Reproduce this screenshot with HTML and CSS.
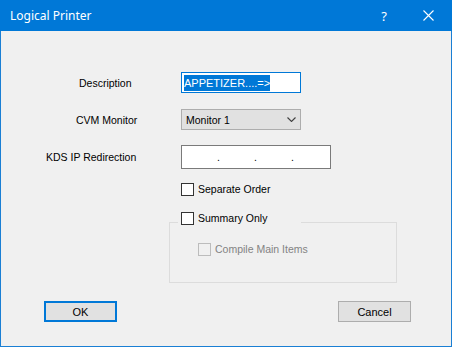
FILE: index.html
```html
<!DOCTYPE html>
<html lang="en">
<head>
    <meta charset="UTF-8">
    <title>Logical Printer</title>
    <link rel="stylesheet" href="styles.css">
</head>
<body>
    <div class="window">
        <div class="titlebar">
            <span class="title">Logical Printer</span>
            <span class="help">?</span>
            <span class="close">
                <svg width="11" height="11" viewBox="0 0 11 11"><path d="M0.5 0.5 L10.5 10.5 M10.5 0.5 L0.5 10.5" stroke="#fff" stroke-width="1.1" fill="none"/></svg>
            </span>
        </div>
        <div class="content">
            <div class="field field-desc">
                <label class="lbl lbl-desc">Description</label>
                <div class="textbox focused"><span class="selected">APPETIZER....=&gt;</span></div>
            </div>
            <div class="field field-cvm">
                <label class="lbl lbl-cvm">CVM Monitor</label>
                <div class="combo">
                    <span>Monitor 1</span>
                    <svg class="chev" width="9" height="5" viewBox="0 0 9 5"><path d="M0.5 0.5 L4.5 4.5 L8.5 0.5" stroke="#404040" stroke-width="1.1" fill="none"/></svg>
                </div>
            </div>
            <div class="field field-kds">
                <label class="lbl lbl-kds">KDS IP Redirection</label>
                <div class="ipbox">
                    <span class="ip-part">.</span>
                    <span class="ip-part">.</span>
                    <span class="ip-part">.</span>
                    <span class="ip-part"></span>
                </div>
            </div>
            <div class="check check-sep">
                <span class="box"></span>Separate Order
            </div>
            <div class="check check-summary">
                <span class="box"></span>Summary Only
            </div>
            <div class="group">
                <div class="check disabled">
                    <span class="box"></span>Compile Main Items
                </div>
            </div>
            <div class="buttons">
                <button class="btn default">OK</button>
                <button class="btn">Cancel</button>
            </div>
        </div>
    </div>
</body>
</html>
```

FILE: styles.css
```css
body {
    margin: 0;
    font-family: "Liberation Sans", Arial, sans-serif;
    font-size: 10.5px;
    color: #000;
}
.window {
    width: 452px;
    height: 347px;
    box-sizing: border-box;
    border: 1px solid #1a7fd4;
    border-top: none;
    background-color: #f0f0f0;
}
.titlebar {
    height: 31px;
    margin: 0 -1px;
    background-color: #0078d7;
    color: #fff;
    display: flex;
    align-items: center;
    font-family: "Noto Sans", sans-serif;
    font-size: 12px;
}
.title {
    margin-left: 10px;
    flex: 1;
}
.help {
    font-size: 13px;
    margin-right: 36px;
}
.close {
    display: flex;
    margin-right: 18px;
}
.content {
    padding-top: 41px;
}
.field {
    display: flex;
    align-items: center;
}
.lbl {
    width: 180px;
    box-sizing: border-box;
}
.lbl-desc { padding-left: 78px; }
.lbl-cvm { padding-left: 75px; }
.lbl-kds { padding-left: 45px; }
.field-cvm { margin-top: 16px; }
.field-kds { margin-top: 15px; }
.textbox {
    width: 120px;
    height: 21px;
    box-sizing: border-box;
    background-color: #fff;
    border: 1px solid #7a7a7a;
    padding-left: 2px;
    display: flex;
    align-items: center;
    font-size: 11px;
}
.textbox.focused {
    border-color: #0078d7;
}
.selected {
    background-color: #0078d7;
    color: #fff;
    line-height: 16px;
}
.combo {
    width: 120px;
    height: 21px;
    box-sizing: border-box;
    background-color: #e1e1e1;
    border: 1px solid #adadad;
    padding: 0 4px 0 4px;
    display: flex;
    align-items: center;
    justify-content: space-between;
}
.ipbox {
    width: 150px;
    height: 24px;
    box-sizing: border-box;
    background-color: #fff;
    border: 1px solid #7a7a7a;
    display: grid;
    grid-template-columns: repeat(4, 37px);
    align-items: center;
}
.ip-part {
    text-align: right;
    margin-right: -1px;
}
.check {
    display: flex;
    align-items: center;
    height: 14px;
}
.box {
    width: 13px;
    height: 13px;
    box-sizing: border-box;
    border: 1px solid #333;
    background-color: #fff;
    margin-right: 4px;
}
.check-sep {
    margin-top: 13px;
    margin-left: 180px;
}
.check-summary {
    margin-top: 15px;
    margin-left: 177px;
    padding-left: 3px;
    width: 120px;
    background-color: #f0f0f0;
    position: relative;
    z-index: 1;
}
.group {
    margin-top: -3px;
    margin-left: 168px;
    width: 228px;
    height: 61px;
    box-sizing: border-box;
    border: 1px solid #dcdcdc;
    padding: 19px 0 0 28px;
}
.check.disabled {
    color: #838383;
}
.check.disabled .box {
    border-color: #bcbcbc;
    background-color: #f0f0f0;
}
.buttons {
    display: flex;
    justify-content: space-between;
    margin-top: 18px;
    padding: 0 40px 0 43px;
}
.btn {
    width: 73px;
    height: 21px;
    box-sizing: border-box;
    background-color: #e1e1e1;
    border: 1px solid #adadad;
    font-family: "Liberation Sans", Arial, sans-serif;
    font-size: 11px;
    color: #000;
    padding: 0;
}
.btn.default {
    border: 2px solid #0078d7;
}
```
